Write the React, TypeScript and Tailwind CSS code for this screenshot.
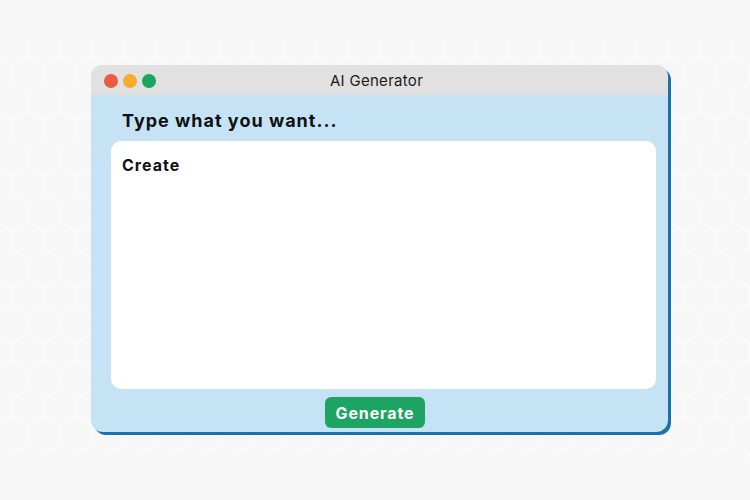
import React from 'react';

const font = { fontFamily: 'Inter, "Noto Sans", sans-serif' };

function HexBackground() {
  return (
    <svg className="absolute left-0 top-[40px] h-[420px] w-full" aria-hidden>
      <defs>
        <pattern id="hex" width="32" height="55.5" patternUnits="userSpaceOnUse" x="-3" y="-12">
          <path
            d="M16 0 L32 9.25 L32 27.75 L16 37 L0 27.75 L0 9.25 Z M16 37 L16 55.5"
            fill="none"
            stroke="#ffffff"
            strokeOpacity="0.7"
            strokeWidth="1.2"
          />
        </pattern>
      </defs>
      <rect width="100%" height="100%" fill="url(#hex)" />
    </svg>
  );
}

export default function App() {
  return (
    <div className="relative h-[500px] w-[750px] overflow-hidden bg-[#f7f7f7]" style={font}>
      <HexBackground />
      <div className="relative pl-[91px] pt-[65px]">
        <div className="flex h-[367px] w-[577px] flex-col overflow-hidden rounded-[12px] bg-[#c5e3f5] shadow-[3px_3px_0_#1a72ad]">
          <div className="relative flex h-[30px] items-center justify-center bg-[#e1e1e1] pt-[3px]">
            <div className="absolute left-[13px] top-[9px] flex gap-[5px]">
              <span className="h-[14px] w-[14px] rounded-full bg-[#ec5b45]" />
              <span className="h-[14px] w-[14px] rounded-full bg-[#f5ab2d]" />
              <span className="h-[14px] w-[14px] rounded-full bg-[#1ba462]" />
            </div>
            <span className="pr-[6px] text-[15px] tracking-[0.3px] text-[#1a1a1a]">AI Generator</span>
          </div>
          <div className="flex flex-1 flex-col pl-[20px] pr-[12px]">
            <div className="flex h-[46px] items-center pl-[11px] pt-[5px] text-[18px] font-bold tracking-[1px] text-[#111]">
              Type what you want...
            </div>
            <div className="h-[248px] rounded-[10px] bg-white px-[11px] pt-[12px] text-[16px] font-bold tracking-[1px] text-[#111]">
              Create
            </div>
            <div className="flex pl-[214px] pt-[8px]">
              <button className="h-[31px] w-[100px] rounded-[6px] bg-[#1ba462] text-[16px] font-bold tracking-[0.9px] text-white">
                Generate
              </button>
            </div>
          </div>
        </div>
      </div>
    </div>
  );
}
